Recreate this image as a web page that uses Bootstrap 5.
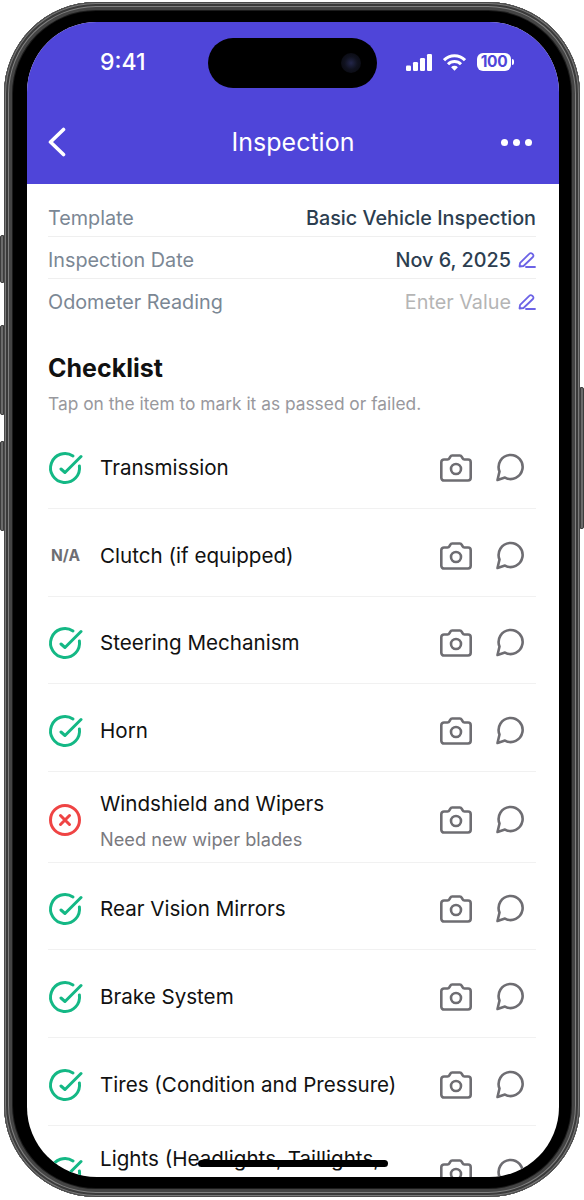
<!DOCTYPE html>
<html lang="en">
<head>
  <title>Inspection</title>
  <meta charset="utf-8">
  <meta name="viewport" content="width=device-width, initial-scale=1">
  <link href="https://cdn.jsdelivr.net/npm/bootstrap@5.3.3/dist/css/bootstrap.min.css" rel="stylesheet">
  <script src="https://cdn.jsdelivr.net/npm/bootstrap@5.3.3/dist/js/bootstrap.bundle.min.js"></script>
  <style>
    html, body { height: 1200px; overflow: hidden; background: #fff; }
    body { font-family: Inter, "Liberation Sans", sans-serif; position: relative; }

    /* device */
    .phone { position: relative; width: 576px; height: 1195px; margin: 2px 0 0 4px; padding: 20px 21px 20px 23px; background: #000; border-radius: 92px;
      box-shadow: inset 0 0 0 1px #4a4a4a, inset 0 0 0 2px #7a7a7a, inset 0 0 0 4px #3a3a3a, inset 0 0 0 5px #808080, inset 0 0 0 8px #444, inset 0 0 0 9px #1c1c1c; }
    .side-key { position: absolute; width: 4px; background: #6b6b6b; border: 1px solid #3c3c3c; }
    .key-a { left: -4px; top: 233px; height: 48px; border-radius: 2px 0 0 2px; }
    .key-b { left: -4px; top: 323px; height: 90px; border-radius: 2px 0 0 2px; }
    .key-c { left: -4px; top: 439px; height: 90px; border-radius: 2px 0 0 2px; }
    .key-d { right: -4px; top: 385px; height: 142px; border-radius: 0 2px 2px 0; }
    .screen { position: relative; height: 1155px; background: #fff; border-radius: 70px; overflow: hidden; }
    .island { position: absolute; left: 181px; top: 16px; width: 169px; height: 50px; background: #000; border-radius: 25px; }
    .lens { position: absolute; right: 16px; top: 15px; width: 20px; height: 20px; border-radius: 50%; background: radial-gradient(circle, #23264a 0, #10121f 45%, #06060a 100%); }
    .home-bar { position: absolute; left: 171px; top: 1138px; width: 190px; height: 7px; background: #000; border-radius: 4px; }

    /* header */
    .app-head { background: #4f45d9; color: #fff; height: 162px; }
    .status-row { height: 24px; padding: 28px 45px 0 73px; box-sizing: content-box; }
    .clock { font-size: 23px; font-weight: 500; line-height: 24px; }
    .status-icons { gap: 11px; }
    .batt { width: 34px; height: 18px; background: #fff; border-radius: 6px; color: #4f45d9; font-size: 15.5px; font-weight: 700; line-height: 18px; text-align: center; letter-spacing: -.4px; }
    .batt-nub { width: 2px; height: 6px; background: #fff; border-radius: 0 2px 2px 0; margin-left: 1px; }
    .nav-row { height: 40px; margin-top: 48px; padding: 0 27px; }
    .nav-side { width: 60px; }
    .nav-back { display: block; margin-left: -6px; }
    .nav-title { font-size: 25px; font-weight: 400; line-height: 40px; }
    .dots { gap: 5px; }
    .dot3 { width: 7px; height: 7px; background: #fff; border-radius: 50%; }

    /* fields */
    .sheet { padding: 13px 23px 0 21px; }
    .field-row { height: 42px; padding-top: 5px; font-size: 19.8px; line-height: 26px; border-bottom: 1px solid #efefef; }
    .field-row:first-child { height: 40px; padding-top: 3px; }
    .field-row:last-child { border-bottom: 0; padding-bottom: 2px; }
    .field-label { color: #7b8794; }
    .field-value { color: #2c3e50; font-weight: 500; }
    .field-empty { color: #b5b5b5; }
    .pencil { width: 18px; height: 18px; margin-left: 7px; flex: none; }
    .list-title { font-size: 25px; font-weight: 700; line-height: 32px; color: #111; margin: 31px 0 0; }
    .list-hint { font-size: 17.35px; line-height: 22px; color: #98989d; margin: 9px 0 0; }

    /* checklist */
    .check-list { margin-top: 6px; }
    .check-row { padding: 18px 0 11px; border-bottom: 1px solid #f1f1f1; }
    .check-inner { min-height: 57.75px; }
    .state-box { width: 52px; flex: none; margin-left: -1px; margin-right: 1px; }
    .state-box svg { display: block; width: 36px; height: 36px; }
    .na-text { display: block; width: 36px; text-align: center; font-size: 15.5px; font-weight: 700; color: #6e6e73; padding-left: 1px; }
    .item-name { font-size: 20.6px; line-height: 28px; color: #111; }
    .item-note { font-size: 18.2px; line-height: 24px; color: #7a7a7f; margin-top: 8.5px; }
    .tool-icons { width: 90px; gap: 18px; margin-right: 8px; margin-left: 16px; flex: none; }
    .tool-icons svg { width: 36px; height: 36px; }
    .ico { fill: none; stroke-linecap: round; stroke-linejoin: round; }
    .ico-pass { stroke: #14b885; stroke-width: 3; }
    .ico-fail { stroke: #ef4444; stroke-width: 3; }
    .ico-tool { stroke: #6e6d72; stroke-width: 2.6; }
    .ico-edit { stroke: #6c63e6; stroke-width: 1.8; }
  </style>
</head>
<body>

  <svg width="0" height="0" class="position-absolute">
    <symbol id="i-pass" viewBox="0 0 36 36"><path class="ico ico-pass" d="M26 5.9A14.5 14.5 0 1 0 32.4 16"/><path class="ico ico-pass" d="M14 19l4 3.5L34 6.5"/></symbol>
    <symbol id="i-fail" viewBox="0 0 36 36"><circle class="ico ico-fail" cx="18" cy="18" r="14.5"/><path class="ico ico-fail" d="M13.5 13.5l9 9M22.5 13.5l-9 9"/></symbol>
    <symbol id="i-camera" viewBox="0 0 36 36"><path class="ico ico-tool" d="M6 9.5h3.5c.9 0 1.6-.5 2-1.3l.7-1.4c.4-.8 1.2-1.3 2-1.3h7.6c.8 0 1.6.5 2 1.3l.7 1.4c.4.8 1.1 1.3 2 1.3H30a2.7 2.7 0 0 1 2.7 2.7v15.6a2.7 2.7 0 0 1-2.7 2.7H6a2.7 2.7 0 0 1-2.7-2.7V12.2A2.7 2.7 0 0 1 6 9.5z"/><circle class="ico ico-tool" cx="18" cy="19" r="5"/></symbol>
    <symbol id="i-bubble" viewBox="0 0 36 36"><path class="ico ico-tool" d="M5.5 30L7.5 21.5A12 12 0 1 1 13 27.6z"/></symbol>
    <symbol id="i-pencil" viewBox="0 0 18 18"><path class="ico ico-edit" d="M1.5 15.5l.6-3.6L11.5 2.6a1.8 1.8 0 0 1 2.6 0l.8.8a1.8 1.8 0 0 1 0 2.6L5.5 15zM8 16h9"/></symbol>
  </svg>

  <div class="phone">
    <span class="side-key key-a"></span>
    <span class="side-key key-b"></span>
    <span class="side-key key-c"></span>
    <span class="side-key key-d"></span>

    <div class="screen">
      <!-- Header -->
      <div class="app-head">
        <div class="status-row d-flex justify-content-between align-items-center">
          <span class="clock">9:41</span>
          <div class="status-icons d-flex align-items-center">
            <svg width="26" height="17" viewBox="0 0 26 17" fill="#fff"><rect x="0" y="11.5" width="5" height="5.5" rx="1.2"/><rect x="7" y="8" width="5" height="9" rx="1.2"/><rect x="14" y="4" width="5" height="13" rx="1.2"/><rect x="21" y="0" width="5" height="17" rx="1.2"/></svg>
            <svg width="23" height="17" viewBox="0 0 23 17" fill="none" stroke="#fff" stroke-width="3"><path d="M1 6.2a14.6 14.6 0 0 1 21 0"/><path d="M5 10.2a9.2 9.2 0 0 1 13 0"/><path d="M11.5 16.8l-3.4-3.6a4.8 4.8 0 0 1 6.8 0z" fill="#fff" stroke="none"/></svg>
            <div class="d-flex align-items-center">
              <div class="batt">100</div>
              <div class="batt-nub"></div>
            </div>
          </div>
        </div>
        <div class="nav-row d-flex justify-content-between align-items-center">
          <div class="nav-side">
            <svg class="nav-back" width="18" height="30" viewBox="0 0 18 30" fill="none" stroke="#fff" stroke-width="3.6" stroke-linecap="round" stroke-linejoin="round"><path d="M15.5 2.5L2.5 15l13 12.5"/></svg>
          </div>
          <span class="nav-title">Inspection</span>
          <div class="nav-side dots d-flex justify-content-end">
            <span class="dot3"></span><span class="dot3"></span><span class="dot3"></span>
          </div>
        </div>
      </div>

      <div class="sheet">
        <div>
          <div class="field-row d-flex justify-content-between align-items-center">
            <span class="field-label">Template</span>
            <span class="field-value">Basic Vehicle Inspection</span>
          </div>
          <div class="field-row d-flex justify-content-between align-items-center">
            <span class="field-label">Inspection Date</span>
            <span class="field-value d-flex align-items-center">Nov 6, 2025<svg class="pencil"><use href="#i-pencil"/></svg></span>
          </div>
          <div class="field-row d-flex justify-content-between align-items-center">
            <span class="field-label">Odometer Reading</span>
            <span class="field-empty d-flex align-items-center">Enter Value<svg class="pencil"><use href="#i-pencil"/></svg></span>
          </div>
        </div>

        <h2 class="list-title">Checklist</h2>
        <p class="list-hint">Tap on the item to mark it as passed or failed.</p>

        <!-- Checklist rows -->
        <div id="checkList" class="check-list"></div>
      </div>

      <div class="island"><span class="lens"></span></div>
      <div class="home-bar"></div>
    </div>
  </div>

  <script>
    const items = [
      { name: 'Transmission', state: 'pass' },
      { name: 'Clutch (if equipped)', state: 'na' },
      { name: 'Steering Mechanism', state: 'pass' },
      { name: 'Horn', state: 'pass' },
      { name: 'Windshield and Wipers', state: 'fail', note: 'Need new wiper blades' },
      { name: 'Rear Vision Mirrors', state: 'pass' },
      { name: 'Brake System', state: 'pass' },
      { name: 'Tires (Condition and Pressure)', state: 'pass' },
      { name: 'Lights (Headlights, Taillights, Turn Signals)', state: 'pass' }
    ];

    function stateHtml(state) {
      if (state === 'na') return '<span class="na-text">N/A</span>';
      return `<svg><use href="#i-${state}"/></svg>`;
    }

    document.getElementById('checkList').innerHTML = items.map(item => `
      <div class="check-row">
        <div class="check-inner d-flex align-items-center">
          <div class="state-box">${stateHtml(item.state)}</div>
          <div class="flex-fill">
            <div class="item-name">${item.name}</div>
            ${item.note ? `<div class="item-note">${item.note}</div>` : ''}
          </div>
          <div class="tool-icons d-flex">
            <svg><use href="#i-camera"/></svg>
            <svg><use href="#i-bubble"/></svg>
          </div>
        </div>
      </div>`).join('');
  </script>

</body>
</html>
